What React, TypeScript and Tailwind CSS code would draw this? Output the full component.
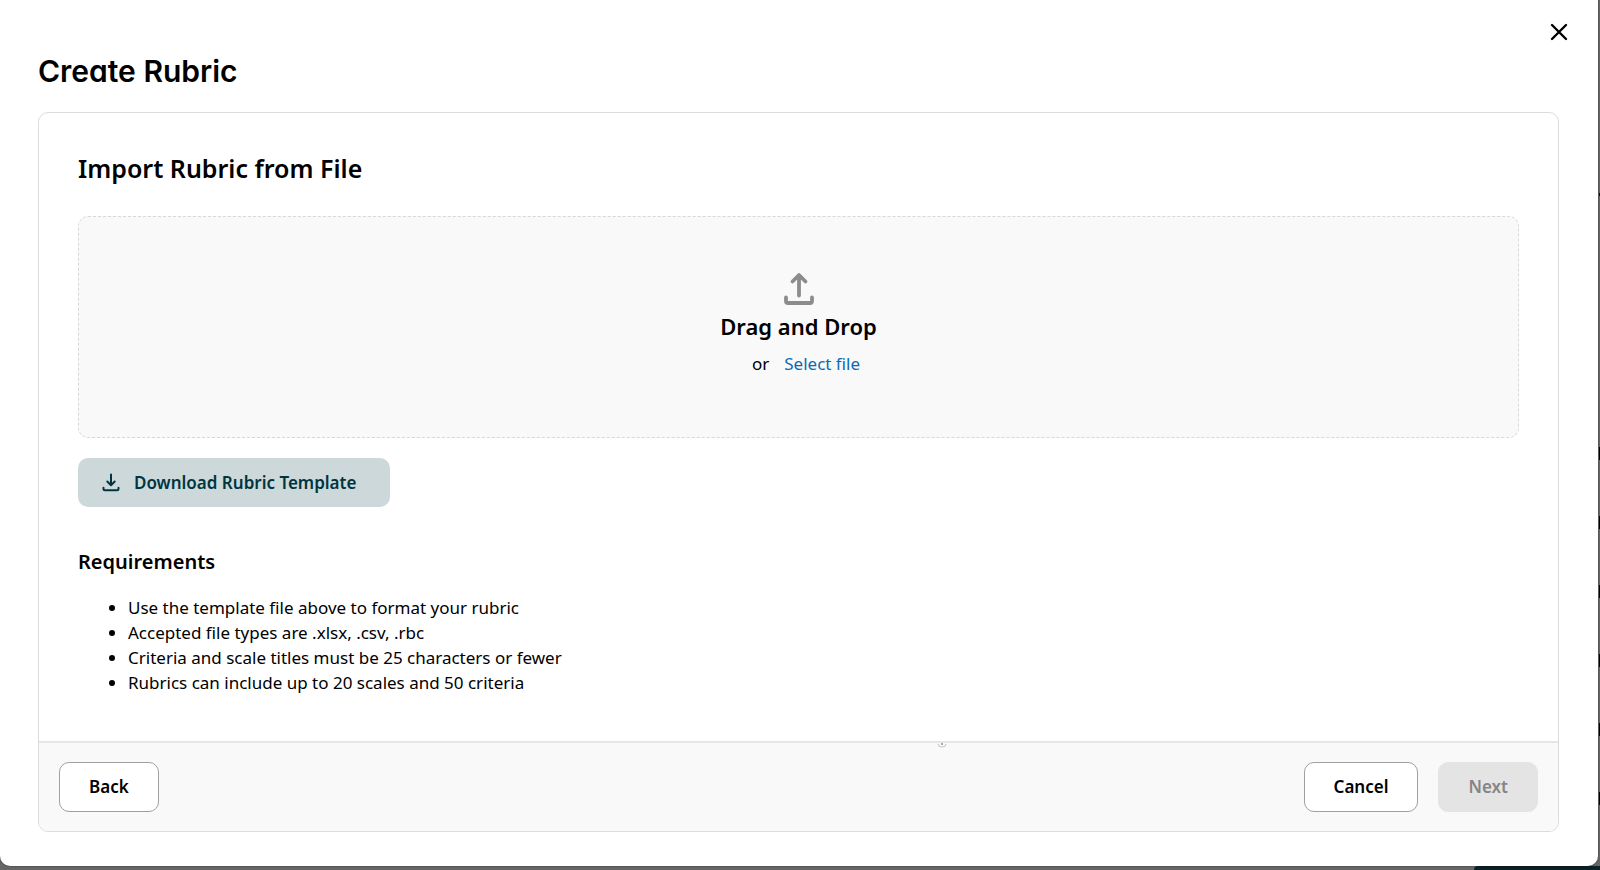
import type { ButtonHTMLAttributes } from "react";

const requirements = [
  "Use the template file above to format your rubric",
  "Accepted file types are .xlsx, .csv, .rbc",
  "Criteria and scale titles must be 25 characters or fewer",
  "Rubrics can include up to 20 scales and 50 criteria",
];

function CloseIcon() {
  return (
    <svg viewBox="0 0 18 18" className="size-[18px]" fill="none" stroke="currentColor" strokeWidth="2.4" strokeLinecap="round" aria-hidden="true">
      <path d="M2 2l14 14M16 2L2 16" />
    </svg>
  );
}

function UploadIcon() {
  return (
    <svg viewBox="0 0 32 34" className="h-[34px] w-8" fill="none" stroke="currentColor" strokeWidth="3.8" strokeLinecap="round" strokeLinejoin="round" aria-hidden="true">
      <path d="M16 23.500V3.500M9.500 9.500l6.500-6.500 6.500 6.500" />
      <path d="M3 25.500v3.500q0 2 2 2h22q2 0 2-2v-3.500" />
    </svg>
  );
}

function DownloadIcon() {
  return (
    <svg viewBox="0 0 18 20" className="h-5 w-[18px]" fill="none" stroke="currentColor" strokeWidth="2" strokeLinecap="round" strokeLinejoin="round" aria-hidden="true">
      <path d="M9 1.500v10.500M5.300 8.500l3.700 3.700 3.700-3.700" />
      <path d="M1.500 14.800v1.200q0 1.300 1.300 1.300h12.400q1.300 0 1.300-1.300v-1.200" />
    </svg>
  );
}

function FooterButton({ className = "", ...props }: ButtonHTMLAttributes<HTMLButtonElement>) {
  return (
    <button
      type="button"
      className={`h-[50px] rounded-[10px] border px-[29px] text-[17px] leading-6 font-semibold ${className}`}
      {...props}
    />
  );
}

function Backdrop() {
  return (
    <div className="absolute inset-0 flex flex-col justify-between bg-[#666]" aria-hidden="true">
      <div className="flex flex-col items-end">
        <div className="mt-[193px] h-[3px] w-px bg-black" />
        <div className="mt-[251px] flex flex-col gap-14">
          {[0, 1, 2, 3, 4, 5].map((row) => (
            <div key={row} className="h-[13px] w-px bg-black" />
          ))}
        </div>
      </div>
      <div className="h-1 w-[126px] self-end rounded-tl bg-[#0b2027]" />
    </div>
  );
}

export default function App() {
  return (
    <div className="relative min-h-screen font-['Noto_Sans',sans-serif] text-black">
      <Backdrop />
      <div className="relative pr-0.5">
        <main role="dialog" aria-labelledby="dialog-title" className="rounded-b-[10px] bg-white pt-4 pr-[39px] pb-[34px] pl-[38px] shadow-[0_0_2px_rgba(0,0,0,0.5)]">
          <div className="flex h-8 justify-end">
            <button type="button" aria-label="Close" className="-mr-4 flex size-8 items-center justify-center">
              <CloseIcon />
            </button>
          </div>
          <h1 id="dialog-title" className="mt-[3px] font-['Inter',sans-serif] text-[30px] leading-10 font-semibold [font-feature-settings:'cv11']">
            Create Rubric
          </h1>

          <div className="mt-[21px] overflow-hidden rounded-[10px] border border-[#dcdcdc]">
            <section className="px-[39px] pt-[39px] pb-[46px]">
              <h2 className="text-[25px] leading-8 font-semibold">Import Rubric from File</h2>

              <div className="mt-8 flex h-[222px] flex-col items-center rounded-[10px] border border-dashed border-[#d8d8d8] bg-[#f9f9f9] pt-[55px] text-[17px] leading-6">
                <span className="text-[#8c8c8c]">
                  <UploadIcon />
                </span>
                <h3 className="mt-1 text-[22px] leading-8 font-semibold">Drag and Drop</h3>
                <div className="mt-[10px] flex items-center gap-[15px] pl-[15px]">
                  <span>or</span>
                  <button type="button" className="text-[#0b69b7]">Select file</button>
                </div>
              </div>

              <button type="button" className="mt-5 flex h-[49px] items-center gap-[14px] rounded-[10px] bg-[#cdd8da] pr-[34px] pl-6 text-[17px] leading-6 font-semibold text-[#003540]">
                <DownloadIcon />
                Download Rubric Template
              </button>

              <h3 className="mt-[39px] text-xl leading-8 font-semibold">Requirements</h3>
              <ul className="mt-[17px] list-disc pl-[50px] text-[17px] leading-[25px]">
                {requirements.map((item) => (
                  <li key={item}>{item}</li>
                ))}
              </ul>
            </section>

            <footer className="relative flex items-center justify-between border-t-2 border-[#e6e6e6] bg-[#f9f9f9] px-5 py-[19px]">
              <svg viewBox="0 0 10 5" className="absolute top-0 left-[898px] h-[5px] w-2.5" fill="none" aria-hidden="true">
                <path d="M1 1q0 3 4 3t4-3" stroke="#c4c4c4" />
                <path d="M4 0h2v2H4z" fill="#aaa" />
              </svg>
              <FooterButton className="border-[#a0a0a0] bg-white">Back</FooterButton>
              <div className="flex gap-5">
                <FooterButton className="border-[#a0a0a0] bg-white">Cancel</FooterButton>
                <FooterButton disabled className="border-[#e4e4e4] bg-[#e4e4e4] text-[#858585]">Next</FooterButton>
              </div>
            </footer>
          </div>
        </main>
      </div>
    </div>
  );
}
